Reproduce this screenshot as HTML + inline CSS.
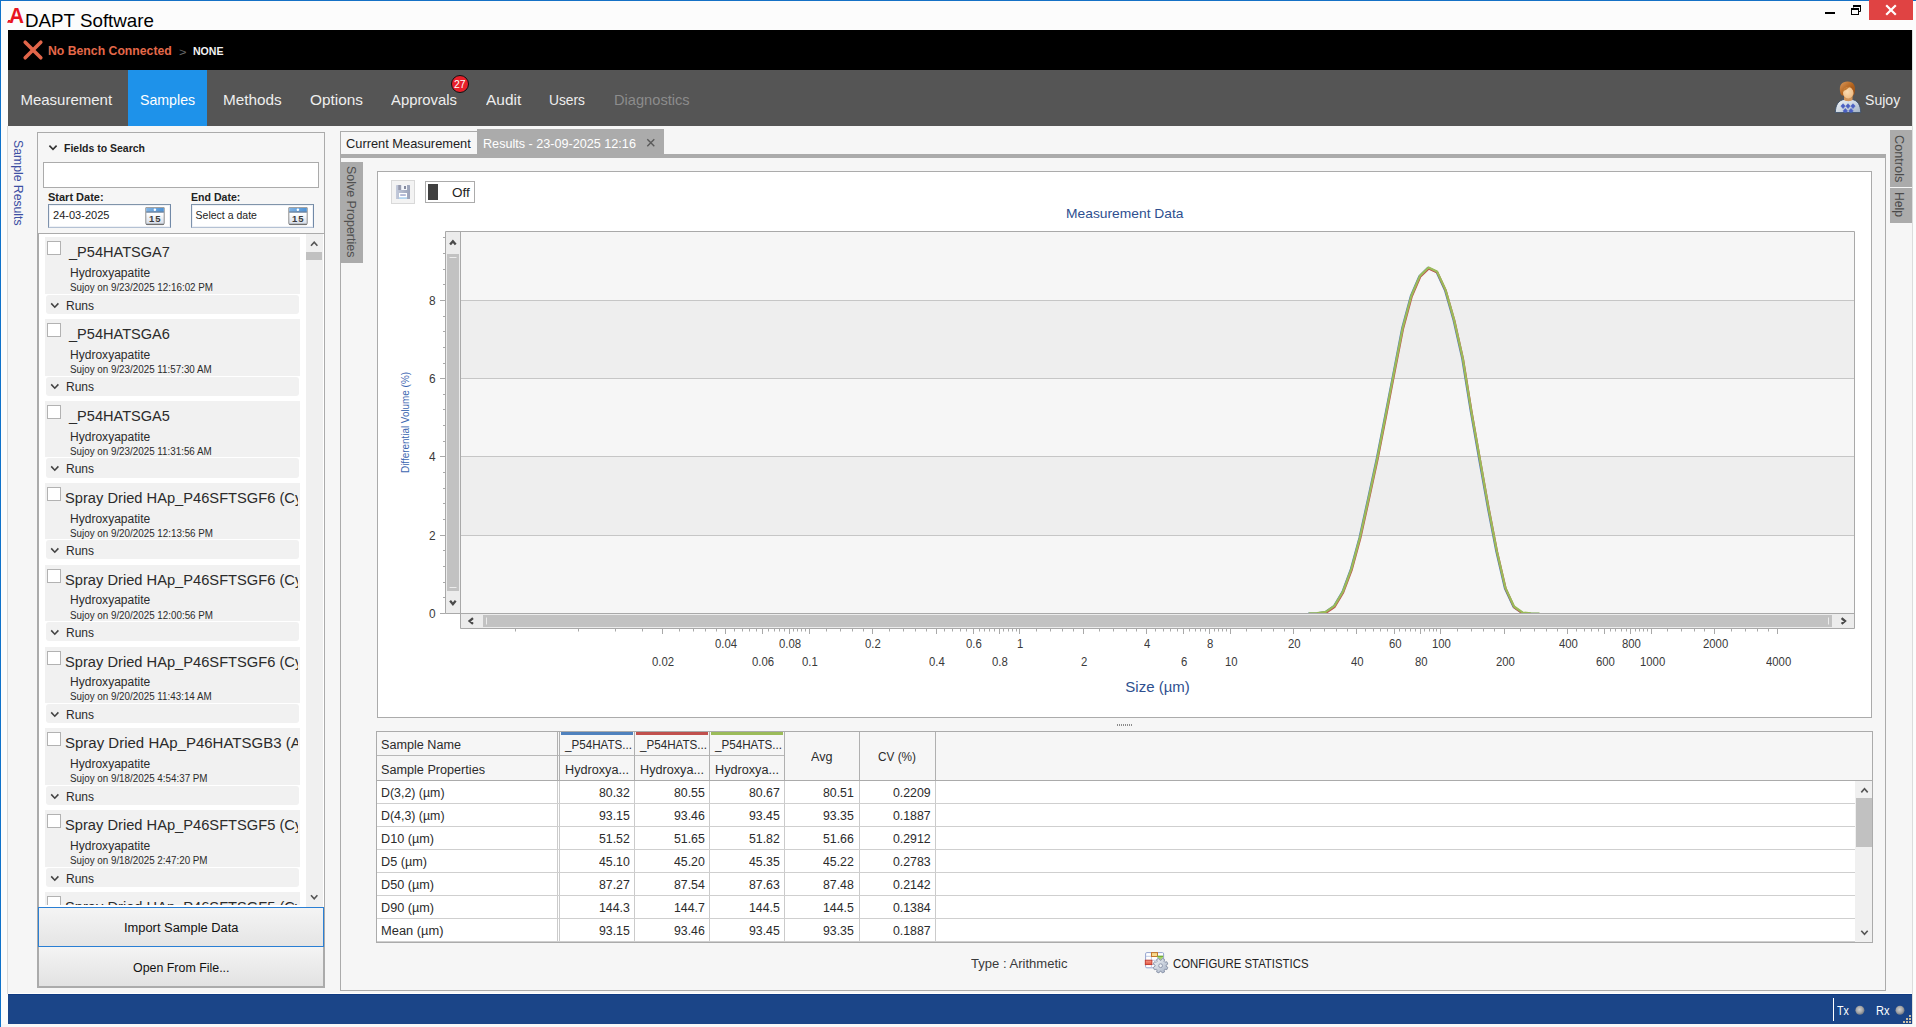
<!DOCTYPE html>
<html lang="en"><head><meta charset="utf-8"><title>ADAPT Software</title>
<style>
html,body{margin:0;padding:0;}
body{width:1916px;height:1027px;position:relative;overflow:hidden;background:#fcfcfc;font-family:"Liberation Sans",sans-serif;}
.r{position:absolute;box-sizing:border-box;}
.t{position:absolute;white-space:pre;line-height:1;transform-origin:0 0;}
svg{position:absolute;overflow:visible;}
</style></head>
<body>
<div class="r" style="left:0px;top:0px;width:1916px;height:1027px;background:#fcfcfc;"></div>
<div class="r" style="left:0px;top:0px;width:1916px;height:1px;background:#1571c6;"></div>
<div class="r" style="left:0px;top:0px;width:1px;height:1027px;background:#0f72ca;"></div>
<div class="r" style="left:8px;top:30px;width:1904px;height:994px;background:#f6f6f6;"></div>
<div class="r" style="left:1912px;top:30px;width:1px;height:994px;background:#dcdcdc;"></div>
<div class="r" style="left:7px;top:126px;width:1px;height:868px;background:#dadada;"></div>
<div class="t" style="top:5.00px;font-size:22px;color:#e8151f;left:8.70px;font-weight:700;transform:scaleX(0.9441);">A</div>
<svg style="left:0;top:0" width="40" height="30" viewBox="0 0 40 30"><path d="M7.04 22.85 L8.27 19.9 L10.6 19.9 L9.4 22.85 Z" fill="#e8151f"/></svg>
<div class="t" style="top:11.00px;font-size:19px;color:#000;left:25.00px;transform:scaleX(0.9878);">DAPT Software</div>
<div class="r" style="left:1825px;top:12px;width:10px;height:2px;background:#000;"></div>
<svg style="left:1850px;top:4px" width="12" height="12" viewBox="0 0 12 12"><path d="M3.5 2 V3.5 M10.5 2 V7.5 H8.5" fill="none" stroke="#000" stroke-width="1"/><path d="M3 2 H11" stroke="#000" stroke-width="2"/><rect x="1.5" y="4.5" width="7" height="6" fill="#fcfcfc" stroke="#000" stroke-width="1"/><path d="M1 5 H9" stroke="#000" stroke-width="2"/></svg>
<div class="r" style="left:1869px;top:0px;width:44px;height:20px;background:#e04343;"></div>
<svg style="left:1885px;top:4px" width="12" height="12" viewBox="0 0 12 12"><path d="M1.2 1.2 L10.8 10.8 M10.8 1.2 L1.2 10.8" stroke="#fff" stroke-width="2.2" fill="none"/></svg>
<div class="r" style="left:8px;top:30px;width:1904px;height:40px;background:#000;"></div>
<svg style="left:22px;top:39px" width="22" height="22" viewBox="0 0 22 22"><path d="M3.2 3.2 L18.8 18.8 M18.8 3.2 L3.2 18.8" stroke="#e2664a" stroke-width="3.6" stroke-linecap="round" fill="none"/></svg>
<div class="t" style="top:44.00px;font-size:13px;color:#e5694a;left:48.40px;font-weight:700;transform:scaleX(0.9417);">No Bench Connected</div>
<div class="t" style="top:46.50px;font-size:11px;color:#6a6a6a;left:178.50px;transform:scaleX(1.1675);">&gt;</div>
<div class="t" style="top:46.00px;font-size:11px;color:#f2f2f2;left:192.50px;font-weight:700;transform:scaleX(0.9597);">NONE</div>
<div class="r" style="left:8px;top:70px;width:1904px;height:56px;background:#555555;"></div>
<div class="r" style="left:128px;top:70px;width:79px;height:56px;background:#1e92ea;"></div>
<div class="t" style="top:92.00px;font-size:15px;color:#eeeeee;left:20.40px;">Measurement</div>
<div class="t" style="top:92.00px;font-size:15px;color:#fff;left:140.30px;transform:scaleX(0.9441);">Samples</div>
<div class="t" style="top:92.00px;font-size:15px;color:#eeeeee;left:223.30px;transform:scaleX(1.0203);">Methods</div>
<div class="t" style="top:92.00px;font-size:15px;color:#eeeeee;left:309.90px;transform:scaleX(1.0233);">Options</div>
<div class="t" style="top:92.00px;font-size:15px;color:#eeeeee;left:391.30px;transform:scaleX(0.9894);">Approvals</div>
<div class="t" style="top:92.00px;font-size:15px;color:#eeeeee;left:485.80px;transform:scaleX(1.0295);">Audit</div>
<div class="t" style="top:92.00px;font-size:15px;color:#eeeeee;left:549.30px;transform:scaleX(0.9190);">Users</div>
<div class="t" style="top:92.00px;font-size:15px;color:#8c8c8c;left:613.60px;transform:scaleX(0.9763);">Diagnostics</div>
<div class="r" style="left:451px;top:75.4px;width:18px;height:18px;background:#e8202a;border:1px solid #111;border-radius:50%;"></div>
<div class="t" style="top:79.00px;font-size:10.5px;color:#fff;left:454.20px;transform:scaleX(0.9932);">27</div>
<svg style="left:1828px;top:76px" width="40" height="42" viewBox="0 0 40 42">
<defs><linearGradient id="ug" x1="0" y1="0" x2="1" y2="1"><stop offset="0" stop-color="#f0f3f7"/><stop offset="0.5" stop-color="#cfd8e2"/><stop offset="1" stop-color="#9fafc3"/></linearGradient>
<radialGradient id="uf" cx="0.4" cy="0.4" r="0.75"><stop offset="0" stop-color="#fbdcb2"/><stop offset="0.7" stop-color="#f0c08a"/><stop offset="1" stop-color="#d69a5c"/></radialGradient>
<linearGradient id="uh" x1="0" y1="0" x2="1" y2="1"><stop offset="0" stop-color="#d99a5e"/><stop offset="0.5" stop-color="#b5651f"/><stop offset="1" stop-color="#8a4716"/></linearGradient>
<clipPath id="ub"><path d="M7.3 36.6 C7.6 28.5 10.5 24.4 16.2 23.4 L24 23.4 C29.6 24.4 32.4 28.5 32.8 36.6 Z"/></clipPath></defs>
<path d="M7.3 36.6 C7.6 28.5 10.5 24.4 16.2 23.4 L24 23.4 C29.6 24.4 32.4 28.5 32.8 36.6 Z" fill="url(#ug)" stroke="#3c4f69" stroke-width="0.9"/>
<g clip-path="url(#ub)" fill="#4a5fc2" stroke="#4a5fc2" stroke-width="0.6" stroke-linejoin="round"><path d="M15.05 27.70 L17.21 30.10 L15.05 32.50 L12.89 30.10 Z M20.00 27.70 L22.16 30.10 L20.00 32.50 L17.84 30.10 Z M25.00 27.70 L27.16 30.10 L25.00 32.50 L22.84 30.10 Z"/><path d="M17.30 32.40 L19.55 34.90 L17.30 37.40 L15.05 34.90 Z M23.00 32.40 L25.25 34.90 L23.00 37.40 L20.75 34.90 Z"/></g>
<path d="M16 20.5 H24.5 V24 C22.5 25.6 18 25.6 16 24 Z" fill="#d3955a"/>
<path d="M16 21 C18.5 23 22 23 24.5 21 L24.5 20 H16 Z" fill="#b87638"/>
<path d="M12.4 17 C10.5 9 14 5.6 19.6 5.6 C25 5.6 28.4 9.4 26.6 17.4 C26 19 25.4 19.6 24.8 19.4 L15 19.6 C13.8 19.6 13 18.8 12.4 17 Z" fill="url(#uh)"/>
<ellipse cx="20.3" cy="16.9" rx="5.3" ry="5.9" fill="url(#uf)"/>
<path d="M14.6 16.4 C14.4 12.4 17.5 10.8 22.6 10.4 C21 11.4 19 13 18 14 C16.8 14.4 15.4 15 14.6 16.4 Z" fill="#c27a34"/>
<path d="M22.4 10.5 C24.6 10.6 26.2 12.4 25.8 16.2 C25 14 23.8 12 22.4 10.5 Z" fill="#a85a1c"/>
</svg>
<div class="t" style="top:92.00px;font-size:15px;color:#eeeeee;left:1864.50px;transform:scaleX(0.9381);">Sujoy</div>
<div class="r" style="left:8px;top:993px;width:1904px;height:1px;background:#ffffff;"></div>
<div class="r" style="left:8px;top:994px;width:1904px;height:30px;background:#1b4588;"></div>
<div class="r" style="left:8px;top:994px;width:1904px;height:1px;background:#0f3a82;"></div>
<div class="r" style="left:1833px;top:998px;width:1px;height:23px;background:#fff;"></div>
<div class="t" style="top:1005.00px;font-size:12px;color:#fff;left:1837.20px;transform:scaleX(0.8852);">Tx</div>
<div class="t" style="top:1005.00px;font-size:12px;color:#fff;left:1875.50px;transform:scaleX(0.9205);">Rx</div>
<svg style="left:1850px;top:1000px" width="60" height="20" viewBox="0 0 60 20"><defs><radialGradient id="led" cx="0.45" cy="0.42" r="0.6"><stop offset="0" stop-color="#cfcfcf"/><stop offset="0.55" stop-color="#a9a9a9"/><stop offset="1" stop-color="#6c7380"/></radialGradient></defs><circle cx="9.9" cy="10.3" r="4.5" fill="url(#led)"/><circle cx="50" cy="10.3" r="4.5" fill="url(#led)"/></svg>
<svg style="left:1902px;top:1014px" width="10" height="10" viewBox="0 0 10 10"><g fill="#c9bfa6"><rect x="7" y="1" width="2" height="2"/><rect x="4" y="4" width="2" height="2"/><rect x="7" y="4" width="2" height="2"/><rect x="1" y="7" width="2" height="2"/><rect x="4" y="7" width="2" height="2"/><rect x="7" y="7" width="2" height="2"/></g></svg>
<div class="r" style="left:1px;top:1024px;width:1915px;height:3px;background:#f8f8f8;"></div>
<div class="t" style="left:24.60px;top:140.20px;font-size:13px;color:#3d4fa3;transform:rotate(90deg) scaleX(0.9402);">Sample Results</div>
<div class="r" style="left:37px;top:132px;width:288px;height:856px;background:#f6f6f6;border:1px solid #ababab;"></div>
<svg style="left:47.7px;top:143.6px" width="10" height="8" viewBox="0 0 10 8"><path d="M1.4 1.6 L5 5.4 L8.6 1.6" fill="none" stroke="#333" stroke-width="1.6"/></svg>
<div class="t" style="top:143.00px;font-size:11px;color:#222;left:64.00px;font-weight:700;transform:scaleX(0.9533);">Fields to Search</div>
<div class="r" style="left:43px;top:162px;width:276px;height:26px;background:#fff;border:1px solid #ababab;"></div>
<div class="t" style="top:192.00px;font-size:11px;color:#222;left:48.00px;font-weight:700;">Start Date:</div>
<div class="t" style="top:192.00px;font-size:11px;color:#222;left:191.30px;font-weight:700;transform:scaleX(0.9603);">End Date:</div>
<div class="r" style="left:48px;top:204px;width:123px;height:24px;background:#fff;border:1px solid #8094aa;border-color:#8094aa #7189a7 #b4c1d3 #7e92ac;box-shadow:inset 0 0 0 1px #eef1f6;"></div>
<div class="t" style="top:210.00px;font-size:10.5px;color:#222;left:52.60px;transform:scaleX(1.0519);">24-03-2025</div>
<svg style="left:145px;top:207px" width="20" height="19" viewBox="0 0 20 19"><defs><linearGradient id="cg48" x1="0" y1="0" x2="0" y2="1"><stop offset="0.35" stop-color="#ffffff"/><stop offset="1" stop-color="#d3dbe8"/></linearGradient><linearGradient id="cb48" x1="0" y1="0" x2="1" y2="0"><stop offset="0" stop-color="#82b3e3"/><stop offset="1" stop-color="#4e92d4"/></linearGradient></defs><path d="M0.8 0.7 H19.2 V16.3 Q19.2 17.6 17.9 17.6 H2.1 Q0.8 17.6 0.8 16.3 Z" fill="url(#cg48)" stroke="#8e8e8e" stroke-width="1"/><path d="M1.2 17.3 H18.8" stroke="#6a6a6a" stroke-width="1.1"/><rect x="1.2" y="1" width="17.6" height="3.8" fill="url(#cb48)"/><rect x="1.2" y="4.5" width="17.6" height="1.1" fill="#4f6b8b"/><circle cx="9.9" cy="2.8" r="1.25" fill="#fff"/><text x="10.3" y="15.1" font-family="Liberation Sans,sans-serif" font-size="9.5" font-weight="700" fill="#3c3c3c" text-anchor="middle" letter-spacing="1.1">15</text></svg>
<div class="r" style="left:191px;top:204px;width:123px;height:24px;background:#fff;border:1px solid #8094aa;border-color:#8094aa #7189a7 #b4c1d3 #7e92ac;box-shadow:inset 0 0 0 1px #eef1f6;"></div>
<div class="t" style="top:210.00px;font-size:10.5px;color:#222;left:195.60px;">Select a date</div>
<svg style="left:288px;top:207px" width="20" height="19" viewBox="0 0 20 19"><defs><linearGradient id="cg191" x1="0" y1="0" x2="0" y2="1"><stop offset="0.35" stop-color="#ffffff"/><stop offset="1" stop-color="#d3dbe8"/></linearGradient><linearGradient id="cb191" x1="0" y1="0" x2="1" y2="0"><stop offset="0" stop-color="#82b3e3"/><stop offset="1" stop-color="#4e92d4"/></linearGradient></defs><path d="M0.8 0.7 H19.2 V16.3 Q19.2 17.6 17.9 17.6 H2.1 Q0.8 17.6 0.8 16.3 Z" fill="url(#cg191)" stroke="#8e8e8e" stroke-width="1"/><path d="M1.2 17.3 H18.8" stroke="#6a6a6a" stroke-width="1.1"/><rect x="1.2" y="1" width="17.6" height="3.8" fill="url(#cb191)"/><rect x="1.2" y="4.5" width="17.6" height="1.1" fill="#4f6b8b"/><circle cx="9.9" cy="2.8" r="1.25" fill="#fff"/><text x="10.3" y="15.1" font-family="Liberation Sans,sans-serif" font-size="9.5" font-weight="700" fill="#3c3c3c" text-anchor="middle" letter-spacing="1.1">15</text></svg>
<div class="r" style="left:38px;top:233px;width:286.5px;height:674.5px;background:#fff;border:1px solid #ababab;border-bottom:none;"></div>
<div class="r" style="left:38.5px;top:234px;width:268px;height:670.5px;overflow:hidden">
<div class="r" style="left:6.5px;top:3.25px;width:255px;height:56.4px;background:#f1f1f1;"></div>
<div class="r" style="left:8.5px;top:7px;width:14px;height:14px;background:#fff;border:1px solid #b2b2b2;"></div>
<div class="t" style="left:30.10px;top:10.00px;font-size:15.5px;color:#2b2b2b;transform:scaleX(0.9394);">_P54HATSGA7</div>
<div class="t" style="left:31.50px;top:33.00px;font-size:12px;color:#2b2b2b;transform:scaleX(1.0032);">Hydroxyapatite</div>
<div class="t" style="left:31.50px;top:49.00px;font-size:10px;color:#2b2b2b;transform:scaleX(0.9817);">Sujoy on 9/23/2025 12:16:02 PM</div>
<div class="r" style="left:7.5px;top:60.75px;width:253px;height:19.1px;background:#f1f1f1;border-radius:3px;"></div>
<svg style="left:11.0px;top:68px" width="10" height="8" viewBox="0 0 10 8"><path d="M1.2 1.4 L4.8 5.2 L8.4 1.4" fill="none" stroke="#444" stroke-width="1.6"/></svg>
<div class="t" style="left:27.50px;top:65.00px;font-size:13px;color:#2b2b2b;transform:scaleX(0.9226);">Runs</div>
<div class="r" style="left:6.5px;top:85.11px;width:255px;height:56.4px;background:#f1f1f1;"></div>
<div class="r" style="left:8.5px;top:89px;width:14px;height:14px;background:#fff;border:1px solid #b2b2b2;"></div>
<div class="t" style="left:30.10px;top:92.00px;font-size:15.5px;color:#2b2b2b;transform:scaleX(0.9394);">_P54HATSGA6</div>
<div class="t" style="left:31.50px;top:115.00px;font-size:12px;color:#2b2b2b;transform:scaleX(1.0032);">Hydroxyapatite</div>
<div class="t" style="left:31.50px;top:131.00px;font-size:10px;color:#2b2b2b;transform:scaleX(0.9817);">Sujoy on 9/23/2025 11:57:30 AM</div>
<div class="r" style="left:7.5px;top:142.61px;width:253px;height:19.1px;background:#f1f1f1;border-radius:3px;"></div>
<svg style="left:11.0px;top:149px" width="10" height="8" viewBox="0 0 10 8"><path d="M1.2 1.4 L4.8 5.2 L8.4 1.4" fill="none" stroke="#444" stroke-width="1.6"/></svg>
<div class="t" style="left:27.50px;top:146.00px;font-size:13px;color:#2b2b2b;transform:scaleX(0.9226);">Runs</div>
<div class="r" style="left:6.5px;top:166.96px;width:255px;height:56.4px;background:#f1f1f1;"></div>
<div class="r" style="left:8.5px;top:171px;width:14px;height:14px;background:#fff;border:1px solid #b2b2b2;"></div>
<div class="t" style="left:30.10px;top:174.00px;font-size:15.5px;color:#2b2b2b;transform:scaleX(0.9394);">_P54HATSGA5</div>
<div class="t" style="left:31.50px;top:197.00px;font-size:12px;color:#2b2b2b;transform:scaleX(1.0032);">Hydroxyapatite</div>
<div class="t" style="left:31.50px;top:213.00px;font-size:10px;color:#2b2b2b;transform:scaleX(0.9817);">Sujoy on 9/23/2025 11:31:56 AM</div>
<div class="r" style="left:7.5px;top:224.46px;width:253px;height:19.1px;background:#f1f1f1;border-radius:3px;"></div>
<svg style="left:11.0px;top:231px" width="10" height="8" viewBox="0 0 10 8"><path d="M1.2 1.4 L4.8 5.2 L8.4 1.4" fill="none" stroke="#444" stroke-width="1.6"/></svg>
<div class="t" style="left:27.50px;top:228.00px;font-size:13px;color:#2b2b2b;transform:scaleX(0.9226);">Runs</div>
<div class="r" style="left:6.5px;top:248.82px;width:255px;height:56.4px;background:#f1f1f1;"></div>
<div class="r" style="left:8.5px;top:253px;width:14px;height:14px;background:#fff;border:1px solid #b2b2b2;"></div>
<div class="r" style="left:6.5px;top:249px;width:253.3px;height:30px;overflow:hidden">
<div class="t" style="left:20.00px;top:7.00px;font-size:15.5px;color:#2b2b2b;transform:scaleX(0.9466);">Spray Dried HAp_P46SFTSGF6 (Cyclone)</div>
</div>
<div class="t" style="left:31.50px;top:279.00px;font-size:12px;color:#2b2b2b;transform:scaleX(1.0032);">Hydroxyapatite</div>
<div class="t" style="left:31.50px;top:295.00px;font-size:10px;color:#2b2b2b;transform:scaleX(0.9817);">Sujoy on 9/20/2025 12:13:56 PM</div>
<div class="r" style="left:7.5px;top:306.32px;width:253px;height:19.1px;background:#f1f1f1;border-radius:3px;"></div>
<svg style="left:11.0px;top:313px" width="10" height="8" viewBox="0 0 10 8"><path d="M1.2 1.4 L4.8 5.2 L8.4 1.4" fill="none" stroke="#444" stroke-width="1.6"/></svg>
<div class="t" style="left:27.50px;top:310.00px;font-size:13px;color:#2b2b2b;transform:scaleX(0.9226);">Runs</div>
<div class="r" style="left:6.5px;top:330.68px;width:255px;height:56.4px;background:#f1f1f1;"></div>
<div class="r" style="left:8.5px;top:335px;width:14px;height:14px;background:#fff;border:1px solid #b2b2b2;"></div>
<div class="r" style="left:6.5px;top:331px;width:253.3px;height:30px;overflow:hidden">
<div class="t" style="left:20.00px;top:7.00px;font-size:15.5px;color:#2b2b2b;transform:scaleX(0.9466);">Spray Dried HAp_P46SFTSGF6 (Cyclone)</div>
</div>
<div class="t" style="left:31.50px;top:360.00px;font-size:12px;color:#2b2b2b;transform:scaleX(1.0032);">Hydroxyapatite</div>
<div class="t" style="left:31.50px;top:377.00px;font-size:10px;color:#2b2b2b;transform:scaleX(0.9817);">Sujoy on 9/20/2025 12:00:56 PM</div>
<div class="r" style="left:7.5px;top:388.18px;width:253px;height:19.1px;background:#f1f1f1;border-radius:3px;"></div>
<svg style="left:11.0px;top:395px" width="10" height="8" viewBox="0 0 10 8"><path d="M1.2 1.4 L4.8 5.2 L8.4 1.4" fill="none" stroke="#444" stroke-width="1.6"/></svg>
<div class="t" style="left:27.50px;top:392.00px;font-size:13px;color:#2b2b2b;transform:scaleX(0.9226);">Runs</div>
<div class="r" style="left:6.5px;top:412.53px;width:255px;height:56.4px;background:#f1f1f1;"></div>
<div class="r" style="left:8.5px;top:417px;width:14px;height:14px;background:#fff;border:1px solid #b2b2b2;"></div>
<div class="r" style="left:6.5px;top:413px;width:253.3px;height:30px;overflow:hidden">
<div class="t" style="left:20.00px;top:7.00px;font-size:15.5px;color:#2b2b2b;transform:scaleX(0.9466);">Spray Dried HAp_P46SFTSGF6 (Cyclone)</div>
</div>
<div class="t" style="left:31.50px;top:442.00px;font-size:12px;color:#2b2b2b;transform:scaleX(1.0032);">Hydroxyapatite</div>
<div class="t" style="left:31.50px;top:458.00px;font-size:10px;color:#2b2b2b;transform:scaleX(0.9817);">Sujoy on 9/20/2025 11:43:14 AM</div>
<div class="r" style="left:7.5px;top:470.03px;width:253px;height:19.1px;background:#f1f1f1;border-radius:3px;"></div>
<svg style="left:11.0px;top:477px" width="10" height="8" viewBox="0 0 10 8"><path d="M1.2 1.4 L4.8 5.2 L8.4 1.4" fill="none" stroke="#444" stroke-width="1.6"/></svg>
<div class="t" style="left:27.50px;top:474.00px;font-size:13px;color:#2b2b2b;transform:scaleX(0.9226);">Runs</div>
<div class="r" style="left:6.5px;top:494.39px;width:255px;height:56.4px;background:#f1f1f1;"></div>
<div class="r" style="left:8.5px;top:498px;width:14px;height:14px;background:#fff;border:1px solid #b2b2b2;"></div>
<div class="r" style="left:6.5px;top:494px;width:253.3px;height:30px;overflow:hidden">
<div class="t" style="left:20.00px;top:7.00px;font-size:15.5px;color:#2b2b2b;transform:scaleX(0.9680);">Spray Dried HAp_P46HATSGB3 (After)</div>
</div>
<div class="t" style="left:31.50px;top:524.00px;font-size:12px;color:#2b2b2b;transform:scaleX(1.0032);">Hydroxyapatite</div>
<div class="t" style="left:31.50px;top:540.00px;font-size:10px;color:#2b2b2b;transform:scaleX(0.9817);">Sujoy on 9/18/2025 4:54:37 PM</div>
<div class="r" style="left:7.5px;top:551.89px;width:253px;height:19.1px;background:#f1f1f1;border-radius:3px;"></div>
<svg style="left:11.0px;top:559px" width="10" height="8" viewBox="0 0 10 8"><path d="M1.2 1.4 L4.8 5.2 L8.4 1.4" fill="none" stroke="#444" stroke-width="1.6"/></svg>
<div class="t" style="left:27.50px;top:556.00px;font-size:13px;color:#2b2b2b;transform:scaleX(0.9226);">Runs</div>
<div class="r" style="left:6.5px;top:576.25px;width:255px;height:56.4px;background:#f1f1f1;"></div>
<div class="r" style="left:8.5px;top:580px;width:14px;height:14px;background:#fff;border:1px solid #b2b2b2;"></div>
<div class="r" style="left:6.5px;top:576px;width:253.3px;height:30px;overflow:hidden">
<div class="t" style="left:20.00px;top:7.00px;font-size:15.5px;color:#2b2b2b;transform:scaleX(0.9466);">Spray Dried HAp_P46SFTSGF5 (Cyclone)</div>
</div>
<div class="t" style="left:31.50px;top:606.00px;font-size:12px;color:#2b2b2b;transform:scaleX(1.0032);">Hydroxyapatite</div>
<div class="t" style="left:31.50px;top:622.00px;font-size:10px;color:#2b2b2b;transform:scaleX(0.9817);">Sujoy on 9/18/2025 2:47:20 PM</div>
<div class="r" style="left:7.5px;top:633.75px;width:253px;height:19.1px;background:#f1f1f1;border-radius:3px;"></div>
<svg style="left:11.0px;top:641px" width="10" height="8" viewBox="0 0 10 8"><path d="M1.2 1.4 L4.8 5.2 L8.4 1.4" fill="none" stroke="#444" stroke-width="1.6"/></svg>
<div class="t" style="left:27.50px;top:638.00px;font-size:13px;color:#2b2b2b;transform:scaleX(0.9226);">Runs</div>
<div class="r" style="left:6.5px;top:658.11px;width:255px;height:56.4px;background:#f1f1f1;"></div>
<div class="r" style="left:8.5px;top:662px;width:14px;height:14px;background:#fff;border:1px solid #b2b2b2;"></div>
<div class="r" style="left:6.5px;top:658px;width:253.3px;height:30px;overflow:hidden">
<div class="t" style="left:20.00px;top:7.00px;font-size:15.5px;color:#2b2b2b;transform:scaleX(0.9466);">Spray Dried HAp_P46SFTSGF5 (Cyclone)</div>
</div>
<div class="t" style="left:31.50px;top:688.00px;font-size:12px;color:#2b2b2b;transform:scaleX(1.0032);">Hydroxyapatite</div>
<div class="t" style="left:31.50px;top:704.00px;font-size:10px;color:#2b2b2b;transform:scaleX(0.9817);">Sujoy on 9/18/2025 1:02:11 PM</div>
<div class="r" style="left:7.5px;top:715.61px;width:253px;height:19.1px;background:#f1f1f1;border-radius:3px;"></div>
<svg style="left:11.0px;top:722px" width="10" height="8" viewBox="0 0 10 8"><path d="M1.2 1.4 L4.8 5.2 L8.4 1.4" fill="none" stroke="#444" stroke-width="1.6"/></svg>
<div class="t" style="left:27.50px;top:719.00px;font-size:13px;color:#2b2b2b;transform:scaleX(0.9226);">Runs</div>
</div>
<div class="r" style="left:306px;top:234px;width:16.5px;height:672.5px;background:#f0f0f0;"></div>
<svg style="left:309px;top:240px" width="11" height="8" viewBox="0 0 11 8"><path d="M2 5.8 L5.2 2.2 L8.4 5.8" fill="none" stroke="#555" stroke-width="1.6"/></svg>
<svg style="left:309px;top:893px" width="11" height="8" viewBox="0 0 11 8"><path d="M2 2.2 L5.2 5.8 L8.4 2.2" fill="none" stroke="#555" stroke-width="1.6"/></svg>
<div class="r" style="left:306px;top:252px;width:16px;height:7.6px;background:#c1c1c1;"></div>
<div class="r" style="left:38px;top:907px;width:286px;height:40px;border:1px solid #2a7fd4;background:linear-gradient(#f4f4f4,#e5e5e5);"></div>
<div class="t" style="top:922.00px;font-size:12.5px;color:#111;left:123.50px;transform:scaleX(1.0300);">Import Sample Data</div>
<div class="r" style="left:38px;top:947px;width:286px;height:40px;border:1px solid #ababab;background:linear-gradient(#f4f4f4,#e2e2e2);border-top:none;"></div>
<div class="t" style="top:962.00px;font-size:12.5px;color:#111;left:133.00px;transform:scaleX(0.9923);">Open From File...</div>
<div class="r" style="left:340px;top:154px;width:1546px;height:837px;background:#f6f6f6;border:1px solid #ababab;"></div>
<div class="r" style="left:340px;top:154px;width:1546px;height:4px;background:#ababab;"></div>
<div class="r" style="left:340px;top:131px;width:138px;height:23px;background:#f6f6f6;border:1px solid #ababab;border-bottom:none;"></div>
<div class="t" style="top:137.00px;font-size:13px;color:#222;left:346.30px;transform:scaleX(0.9870);">Current Measurement</div>
<div class="r" style="left:477px;top:129px;width:187px;height:25px;background:#ababab;"></div>
<div class="t" style="top:137.00px;font-size:13px;color:#fff;left:483.40px;transform:scaleX(0.9705);">Results - 23-09-2025 12:16</div>
<svg style="left:646px;top:138px" width="10" height="10" viewBox="0 0 10 10"><path d="M1.3 1.3 L8.3 8.3 M8.3 1.3 L1.3 8.3" stroke="#5a5a5a" stroke-width="1.4" fill="none"/></svg>
<div class="r" style="left:341px;top:162px;width:22px;height:101px;background:#ababab;"></div>
<div class="t" style="left:357.80px;top:166.40px;font-size:13px;color:#505050;transform:rotate(90deg) scaleX(0.9582);">Solve Properties</div>
<div class="r" style="left:1890px;top:130px;width:22px;height:57px;background:#ababab;"></div>
<div class="t" style="left:1905.80px;top:134.50px;font-size:13px;color:#4a4a4a;transform:rotate(90deg) scaleX(0.9771);">Controls</div>
<div class="r" style="left:1890px;top:188px;width:22px;height:35px;background:#ababab;"></div>
<div class="t" style="left:1905.80px;top:191.90px;font-size:13px;color:#4a4a4a;transform:rotate(90deg) scaleX(0.9350);">Help</div>
<div class="r" style="left:376.5px;top:171px;width:1495.5px;height:546.5px;background:#fff;border:1px solid #ababab;"></div>
<div class="r" style="left:391px;top:180px;width:24px;height:24px;background:#f3f3f3;border:1px solid #d9d9d9;"></div>
<svg style="left:396px;top:185px" width="14" height="14" viewBox="0 0 14 14"><defs><linearGradient id="fl" x1="0" y1="0" x2="1" y2="0"><stop offset="0" stop-color="#c3cadb"/><stop offset="0.5" stop-color="#adb5c9"/><stop offset="1" stop-color="#9aa2b8"/></linearGradient></defs><rect x="0" y="0" width="14" height="14" rx="0.6" fill="url(#fl)"/><rect x="2.3" y="0" width="2.6" height="5" fill="#9498ab"/><rect x="5.3" y="0" width="5.7" height="5" fill="#f3f5fa"/><rect x="8" y="1" width="2" height="3" fill="#84899c"/><rect x="3" y="8" width="8" height="6" fill="#ffffff"/><rect x="4.2" y="9.2" width="5.6" height="1.7" fill="#aab2d2"/><rect x="3" y="12.2" width="8" height="1.8" fill="#b4d5ef"/></svg>
<div class="r" style="left:425px;top:181px;width:50px;height:22px;background:#fff;border:1px solid #ababab;"></div>
<div class="r" style="left:428px;top:184px;width:10px;height:16px;background:#404040;"></div>
<div class="t" style="top:185.50px;font-size:13px;color:#222;left:452.00px;transform:scaleX(1.0409);">Off</div>
<div class="t" style="top:207.00px;font-size:13.5px;color:#2e4f8f;left:1066.00px;transform:scaleX(1.0235);">Measurement Data</div>
<div class="t" style="left:400.50px;top:472.50px;font-size:10px;color:#3b66b0;transform:rotate(-90deg) scaleX(0.9894);">Differential Volume (%)</div>
<div class="t" style="top:679.00px;font-size:15px;color:#2e4f8f;left:1125.30px;">Size (µm)</div>
<svg style="left:0;top:0" width="1916" height="1027" viewBox="0 0 1916 1027"><rect x="460.5" y="231.5" width="1394.0" height="382.0" fill="#f6f6f6"/>
<rect x="460.5" y="300.4" width="1394.0" height="78.3" fill="#eeeeee"/>
<rect x="460.5" y="456.9" width="1394.0" height="78.3" fill="#eeeeee"/>
<path d="M460.5 535.5 H1854.5" stroke="#c6c6c6" stroke-width="1"/>
<path d="M460.5 456.5 H1854.5" stroke="#c6c6c6" stroke-width="1"/>
<path d="M460.5 378.5 H1854.5" stroke="#c6c6c6" stroke-width="1"/>
<path d="M460.5 300.5 H1854.5" stroke="#c6c6c6" stroke-width="1"/>
<rect x="446" y="232" width="14" height="381" fill="#ececec"/>
<rect x="447" y="254" width="12" height="337" fill="#c2c2c2"/>
<path d="M449.5 257.5 H456.5 M449.5 587.5 H456.5" stroke="#ececec" stroke-width="1"/>
<path d="M450.1 244.6 L452.9 241.2 L455.7 244.6 M450.1 600.8 L452.9 604.2 L455.7 600.8" fill="none" stroke="#4a4a4a" stroke-width="2.3"/>
<rect x="461" y="614" width="1393" height="14" fill="#ececec"/>
<rect x="483" y="615" width="1349" height="12" fill="#c2c2c2"/>
<path d="M486.5 617.5 V624.5 M1828.5 617.5 V624.5" stroke="#ececec" stroke-width="1"/>
<path d="M473 618.2 L469.6 621 L473 623.8 M1841.6 618.2 L1845 621 L1841.6 623.8" fill="none" stroke="#4a4a4a" stroke-width="2.3"/>
<path d="M445.5 231.5 H1854.5 V628.5 H460.5 V231.5 M445.5 231.5 V613.5 H1854.5" fill="none" stroke="#a9a9a9" stroke-width="1"/>
<path d="M440 613.5 H445.5 M443 597.5 H445.5 M443 582.5 H445.5 M443 566.5 H445.5 M443 550.5 H445.5 M440 535.5 H445.5 M443 519.5 H445.5 M443 503.5 H445.5 M443 488.5 H445.5 M443 472.5 H445.5 M440 456.5 H445.5 M443 441.5 H445.5 M443 425.5 H445.5 M443 409.5 H445.5 M443 394.5 H445.5 M440 378.5 H445.5 M443 363.5 H445.5 M443 347.5 H445.5 M443 331.5 H445.5 M443 316.5 H445.5 M440 300.5 H445.5 M443 284.5 H445.5 M443 269.5 H445.5 M443 253.5 H445.5 M443 237.5 H445.5" stroke="#a9a9a9" stroke-width="1"/>
<path d="M515.5 628.5 V631.5 M578.5 628.5 V631.5 M615.5 628.5 V631.5 M642.5 628.5 V631.5 M662.5 628.5 V634 M679.5 628.5 V631.5 M693.5 628.5 V631.5 M705.5 628.5 V631.5 M716.5 628.5 V631.5 M725.5 628.5 V634 M734.5 628.5 V631.5 M742.5 628.5 V631.5 M749.5 628.5 V631.5 M756.5 628.5 V631.5 M762.5 628.5 V634 M768.5 628.5 V631.5 M774.5 628.5 V631.5 M779.5 628.5 V631.5 M784.5 628.5 V631.5 M789.5 628.5 V634 M793.5 628.5 V631.5 M797.5 628.5 V631.5 M801.5 628.5 V631.5 M805.5 628.5 V631.5 M809.5 628.5 V634 M826.5 628.5 V631.5 M840.5 628.5 V631.5 M852.5 628.5 V631.5 M863.5 628.5 V631.5 M872.5 628.5 V634 M889.5 628.5 V631.5 M903.5 628.5 V631.5 M915.5 628.5 V631.5 M926.5 628.5 V631.5 M936.5 628.5 V634 M944.5 628.5 V631.5 M952.5 628.5 V631.5 M960.5 628.5 V631.5 M966.5 628.5 V631.5 M973.5 628.5 V634 M979.5 628.5 V631.5 M984.5 628.5 V631.5 M989.5 628.5 V631.5 M994.5 628.5 V631.5 M999.5 628.5 V634 M1003.5 628.5 V631.5 M1008.5 628.5 V631.5 M1012.5 628.5 V631.5 M1016.5 628.5 V631.5 M1019.5 628.5 V634 M1036.5 628.5 V631.5 M1050.5 628.5 V631.5 M1062.5 628.5 V631.5 M1073.5 628.5 V631.5 M1083.5 628.5 V634 M1099.5 628.5 V631.5 M1113.5 628.5 V631.5 M1126.5 628.5 V631.5 M1136.5 628.5 V631.5 M1146.5 628.5 V634 M1155.5 628.5 V631.5 M1163.5 628.5 V631.5 M1170.5 628.5 V631.5 M1177.5 628.5 V631.5 M1183.5 628.5 V634 M1189.5 628.5 V631.5 M1195.5 628.5 V631.5 M1200.5 628.5 V631.5 M1205.5 628.5 V631.5 M1209.5 628.5 V634 M1214.5 628.5 V631.5 M1218.5 628.5 V631.5 M1222.5 628.5 V631.5 M1226.5 628.5 V631.5 M1230.5 628.5 V634 M1246.5 628.5 V631.5 M1261.5 628.5 V631.5 M1273.5 628.5 V631.5 M1284.5 628.5 V631.5 M1293.5 628.5 V634 M1310.5 628.5 V631.5 M1324.5 628.5 V631.5 M1336.5 628.5 V631.5 M1347.5 628.5 V631.5 M1356.5 628.5 V634 M1365.5 628.5 V631.5 M1373.5 628.5 V631.5 M1380.5 628.5 V631.5 M1387.5 628.5 V631.5 M1394.5 628.5 V634 M1399.5 628.5 V631.5 M1405.5 628.5 V631.5 M1410.5 628.5 V631.5 M1415.5 628.5 V631.5 M1420.5 628.5 V634 M1424.5 628.5 V631.5 M1429.5 628.5 V631.5 M1433.5 628.5 V631.5 M1436.5 628.5 V631.5 M1440.5 628.5 V634 M1457.5 628.5 V631.5 M1471.5 628.5 V631.5 M1483.5 628.5 V631.5 M1494.5 628.5 V631.5 M1504.5 628.5 V634 M1520.5 628.5 V631.5 M1534.5 628.5 V631.5 M1546.5 628.5 V631.5 M1557.5 628.5 V631.5 M1567.5 628.5 V634 M1576.5 628.5 V631.5 M1584.5 628.5 V631.5 M1591.5 628.5 V631.5 M1598.5 628.5 V631.5 M1604.5 628.5 V634 M1610.5 628.5 V631.5 M1615.5 628.5 V631.5 M1621.5 628.5 V631.5 M1626.5 628.5 V631.5 M1630.5 628.5 V634 M1635.5 628.5 V631.5 M1639.5 628.5 V631.5 M1643.5 628.5 V631.5 M1647.5 628.5 V631.5 M1651.5 628.5 V634 M1667.5 628.5 V631.5 M1681.5 628.5 V631.5 M1694.5 628.5 V631.5 M1704.5 628.5 V631.5 M1714.5 628.5 V634 M1731.5 628.5 V631.5 M1745.5 628.5 V631.5 M1757.5 628.5 V631.5 M1768.5 628.5 V631.5 M1777.5 628.5 V634" stroke="#a9a9a9" stroke-width="1"/>
<clipPath id="pc"><rect x="460.5" y="231.5" width="1394.0" height="381.5"/></clipPath>
<polyline clip-path="url(#pc)" fill="none" stroke="#4f81bd" stroke-width="2.2" stroke-linejoin="round" points="1308.2,613.7 1316.8,613.3 1325.3,612.1 1333.9,606.2 1342.5,591.8 1351.0,568.9 1359.5,537.7 1368.1,498.7 1376.7,459.0 1385.2,415.6 1393.8,371.7 1402.3,327.8 1410.8,296.3 1419.4,276.2 1428.0,267.8 1436.5,271.8 1445.0,290.2 1453.6,320.2 1462.2,358.3 1470.7,410.9 1479.2,459.3 1487.8,507.4 1496.3,551.3 1504.9,588.2 1513.5,606.8 1522.0,612.8 1530.5,613.6 1539.1,613.8"/>
<polyline clip-path="url(#pc)" fill="none" stroke="#c0504d" stroke-width="2.2" stroke-linejoin="round" points="1309.0,614.3 1317.6,613.9 1326.1,612.7 1334.7,606.8 1343.2,592.4 1351.8,569.5 1360.3,538.3 1368.9,499.3 1377.5,459.6 1386.0,416.2 1394.5,372.3 1403.1,328.4 1411.6,296.9 1420.2,276.8 1428.8,268.4 1437.3,272.4 1445.8,290.8 1454.4,320.8 1463.0,358.9 1471.5,411.5 1480.0,459.9 1488.6,508.0 1497.1,551.9 1505.7,588.8 1514.2,607.4 1522.8,613.4 1531.3,614.2 1539.9,614.4"/>
<polyline clip-path="url(#pc)" fill="none" stroke="#9bbb59" stroke-width="2.2" stroke-linejoin="round" points="1308.8,613.4 1317.3,613.0 1325.8,611.8 1334.4,605.9 1343.0,591.5 1351.5,568.6 1360.0,537.4 1368.6,498.4 1377.2,458.7 1385.7,415.3 1394.2,371.4 1402.8,327.5 1411.3,296.0 1419.9,275.9 1428.5,267.5 1437.0,271.5 1445.5,289.9 1454.1,319.9 1462.7,358.0 1471.2,410.6 1479.8,459.0 1488.3,507.1 1496.8,551.0 1505.4,587.9 1514.0,606.5 1522.5,612.5 1531.0,613.3 1539.6,613.5"/></svg>
<div class="t" style="top:608.00px;font-size:12px;color:#3a3a3a;left:428.50px;transform:scaleX(0.9889);">0</div>
<div class="t" style="top:530.00px;font-size:12px;color:#3a3a3a;left:428.50px;transform:scaleX(0.9889);">2</div>
<div class="t" style="top:451.00px;font-size:12px;color:#3a3a3a;left:428.50px;transform:scaleX(0.9889);">4</div>
<div class="t" style="top:373.00px;font-size:12px;color:#3a3a3a;left:428.50px;transform:scaleX(0.9889);">6</div>
<div class="t" style="top:295.00px;font-size:12px;color:#3a3a3a;left:428.50px;transform:scaleX(0.9889);">8</div>
<div class="t" style="top:638.00px;font-size:12px;color:#3a3a3a;left:715.16px;transform:scaleX(0.9450);">0.04</div>
<div class="t" style="top:638.00px;font-size:12px;color:#3a3a3a;left:779.16px;transform:scaleX(0.9450);">0.08</div>
<div class="t" style="top:638.00px;font-size:12px;color:#3a3a3a;left:865.32px;transform:scaleX(0.9450);">0.2</div>
<div class="t" style="top:638.00px;font-size:12px;color:#3a3a3a;left:966.32px;transform:scaleX(0.9450);">0.6</div>
<div class="t" style="top:638.00px;font-size:12px;color:#3a3a3a;left:1017.05px;transform:scaleX(0.9450);">1</div>
<div class="t" style="top:638.00px;font-size:12px;color:#3a3a3a;left:1144.05px;transform:scaleX(0.9450);">4</div>
<div class="t" style="top:638.00px;font-size:12px;color:#3a3a3a;left:1207.05px;transform:scaleX(0.9450);">8</div>
<div class="t" style="top:638.00px;font-size:12px;color:#3a3a3a;left:1287.89px;transform:scaleX(0.9450);">20</div>
<div class="t" style="top:638.00px;font-size:12px;color:#3a3a3a;left:1388.89px;transform:scaleX(0.9450);">60</div>
<div class="t" style="top:638.00px;font-size:12px;color:#3a3a3a;left:1431.74px;transform:scaleX(0.9450);">100</div>
<div class="t" style="top:638.00px;font-size:12px;color:#3a3a3a;left:1558.74px;transform:scaleX(0.9450);">400</div>
<div class="t" style="top:638.00px;font-size:12px;color:#3a3a3a;left:1621.74px;transform:scaleX(0.9450);">800</div>
<div class="t" style="top:638.00px;font-size:12px;color:#3a3a3a;left:1702.59px;transform:scaleX(0.9450);">2000</div>
<div class="t" style="top:656.00px;font-size:12px;color:#3a3a3a;left:652.16px;transform:scaleX(0.9450);">0.02</div>
<div class="t" style="top:656.00px;font-size:12px;color:#3a3a3a;left:752.16px;transform:scaleX(0.9450);">0.06</div>
<div class="t" style="top:656.00px;font-size:12px;color:#3a3a3a;left:802.32px;transform:scaleX(0.9450);">0.1</div>
<div class="t" style="top:656.00px;font-size:12px;color:#3a3a3a;left:929.32px;transform:scaleX(0.9450);">0.4</div>
<div class="t" style="top:656.00px;font-size:12px;color:#3a3a3a;left:992.32px;transform:scaleX(0.9450);">0.8</div>
<div class="t" style="top:656.00px;font-size:12px;color:#3a3a3a;left:1081.05px;transform:scaleX(0.9450);">2</div>
<div class="t" style="top:656.00px;font-size:12px;color:#3a3a3a;left:1181.05px;transform:scaleX(0.9450);">6</div>
<div class="t" style="top:656.00px;font-size:12px;color:#3a3a3a;left:1224.89px;transform:scaleX(0.9450);">10</div>
<div class="t" style="top:656.00px;font-size:12px;color:#3a3a3a;left:1350.89px;transform:scaleX(0.9450);">40</div>
<div class="t" style="top:656.00px;font-size:12px;color:#3a3a3a;left:1414.89px;transform:scaleX(0.9450);">80</div>
<div class="t" style="top:656.00px;font-size:12px;color:#3a3a3a;left:1495.74px;transform:scaleX(0.9450);">200</div>
<div class="t" style="top:656.00px;font-size:12px;color:#3a3a3a;left:1595.74px;transform:scaleX(0.9450);">600</div>
<div class="t" style="top:656.00px;font-size:12px;color:#3a3a3a;left:1639.59px;transform:scaleX(0.9450);">1000</div>
<div class="t" style="top:656.00px;font-size:12px;color:#3a3a3a;left:1765.59px;transform:scaleX(0.9450);">4000</div>
<div class="r" style="left:376px;top:731px;width:1497px;height:212px;background:#fff;border:1px solid #ababab;"></div>
<div class="r" style="left:377px;top:732px;width:1495px;height:48px;background:#f6f6f6;"></div>
<svg style="left:1117px;top:723px" width="15" height="4" viewBox="0 0 15 4"><rect x="0" y="1" width="1" height="2" fill="#8c8c8c"/><rect x="2" y="1" width="1" height="2" fill="#8c8c8c"/><rect x="4" y="1" width="1" height="2" fill="#8c8c8c"/><rect x="6" y="1" width="1" height="2" fill="#8c8c8c"/><rect x="8" y="1" width="1" height="2" fill="#8c8c8c"/><rect x="10" y="1" width="1" height="2" fill="#8c8c8c"/><rect x="12" y="1" width="1" height="2" fill="#8c8c8c"/><rect x="14" y="1" width="1" height="2" fill="#8c8c8c"/></svg>
<svg style="left:0;top:0" width="1916" height="1027" viewBox="0 0 1916 1027"><path d="M377 780.5 H1872" stroke="#ababab" stroke-width="1"/>
<path d="M377 755.5 H784.5" stroke="#b8b8b8" stroke-width="1"/>
<path d="M557.5 732 V780" stroke="#b0b0b0" stroke-width="1"/>
<path d="M557.5 781 V942" stroke="#cbcbcb" stroke-width="1"/>
<path d="M559.5 732 V780" stroke="#b0b0b0" stroke-width="1"/>
<path d="M559.5 781 V942" stroke="#cbcbcb" stroke-width="1"/>
<path d="M634.5 732 V780" stroke="#b0b0b0" stroke-width="1"/>
<path d="M634.5 781 V942" stroke="#cbcbcb" stroke-width="1"/>
<path d="M709.5 732 V780" stroke="#b0b0b0" stroke-width="1"/>
<path d="M709.5 781 V942" stroke="#cbcbcb" stroke-width="1"/>
<path d="M784.5 732 V780" stroke="#b0b0b0" stroke-width="1"/>
<path d="M784.5 781 V942" stroke="#cbcbcb" stroke-width="1"/>
<path d="M859.5 732 V780" stroke="#b0b0b0" stroke-width="1"/>
<path d="M859.5 781 V942" stroke="#cbcbcb" stroke-width="1"/>
<path d="M935.5 732 V780" stroke="#b0b0b0" stroke-width="1"/>
<path d="M935.5 781 V942" stroke="#cbcbcb" stroke-width="1"/>
<path d="M377 803.5 H1855" stroke="#cfcfcf" stroke-width="1"/>
<path d="M377 826.5 H1855" stroke="#cfcfcf" stroke-width="1"/>
<path d="M377 849.5 H1855" stroke="#cfcfcf" stroke-width="1"/>
<path d="M377 872.5 H1855" stroke="#cfcfcf" stroke-width="1"/>
<path d="M377 895.5 H1855" stroke="#cfcfcf" stroke-width="1"/>
<path d="M377 918.5 H1855" stroke="#cfcfcf" stroke-width="1"/>
<path d="M377 941.5 H1855" stroke="#cfcfcf" stroke-width="1"/>
<rect x="561" y="732" width="72" height="3" fill="#4f81bd"/>
<rect x="636" y="732" width="72" height="3" fill="#c0504d"/>
<rect x="711" y="732" width="72" height="3" fill="#9bbb59"/></svg>
<div class="t" style="top:739.00px;font-size:12.5px;color:#2b2b2b;left:381.00px;transform:scaleX(1.0101);">Sample Name</div>
<div class="t" style="top:764.00px;font-size:12.5px;color:#2b2b2b;left:381.00px;transform:scaleX(1.0114);">Sample Properties</div>
<div class="t" style="top:739.00px;font-size:12.5px;color:#2b2b2b;left:565.00px;transform:scaleX(0.9303);">_P54HATS...</div>
<div class="t" style="top:764.00px;font-size:12.5px;color:#2b2b2b;left:565.00px;transform:scaleX(1.0124);">Hydroxya...</div>
<div class="t" style="top:739.00px;font-size:12.5px;color:#2b2b2b;left:640.00px;transform:scaleX(0.9303);">_P54HATS...</div>
<div class="t" style="top:764.00px;font-size:12.5px;color:#2b2b2b;left:640.00px;transform:scaleX(1.0124);">Hydroxya...</div>
<div class="t" style="top:739.00px;font-size:12.5px;color:#2b2b2b;left:715.00px;transform:scaleX(0.9303);">_P54HATS...</div>
<div class="t" style="top:764.00px;font-size:12.5px;color:#2b2b2b;left:715.00px;transform:scaleX(1.0124);">Hydroxya...</div>
<div class="t" style="top:751.00px;font-size:12.5px;color:#2b2b2b;left:811.00px;transform:scaleX(1.0087);">Avg</div>
<div class="t" style="top:751.00px;font-size:12.5px;color:#2b2b2b;left:878.00px;transform:scaleX(0.9434);">CV (%)</div>
<div class="t" style="top:787.00px;font-size:12.5px;color:#2b2b2b;left:381.00px;transform:scaleX(0.9900);">D(3,2) (µm)</div>
<div class="t" style="top:787.00px;font-size:12.5px;color:#2b2b2b;left:598.69px;transform:scaleX(0.9850);">80.32</div>
<div class="t" style="top:787.00px;font-size:12.5px;color:#2b2b2b;left:673.69px;transform:scaleX(0.9850);">80.55</div>
<div class="t" style="top:787.00px;font-size:12.5px;color:#2b2b2b;left:748.69px;transform:scaleX(0.9850);">80.67</div>
<div class="t" style="top:787.00px;font-size:12.5px;color:#2b2b2b;left:822.79px;transform:scaleX(0.9850);">80.51</div>
<div class="t" style="top:787.00px;font-size:12.5px;color:#2b2b2b;left:892.54px;transform:scaleX(0.9850);">0.2209</div>
<div class="t" style="top:810.00px;font-size:12.5px;color:#2b2b2b;left:381.00px;transform:scaleX(0.9900);">D(4,3) (µm)</div>
<div class="t" style="top:810.00px;font-size:12.5px;color:#2b2b2b;left:598.69px;transform:scaleX(0.9850);">93.15</div>
<div class="t" style="top:810.00px;font-size:12.5px;color:#2b2b2b;left:673.69px;transform:scaleX(0.9850);">93.46</div>
<div class="t" style="top:810.00px;font-size:12.5px;color:#2b2b2b;left:748.69px;transform:scaleX(0.9850);">93.45</div>
<div class="t" style="top:810.00px;font-size:12.5px;color:#2b2b2b;left:822.79px;transform:scaleX(0.9850);">93.35</div>
<div class="t" style="top:810.00px;font-size:12.5px;color:#2b2b2b;left:892.54px;transform:scaleX(0.9850);">0.1887</div>
<div class="t" style="top:833.00px;font-size:12.5px;color:#2b2b2b;left:381.00px;transform:scaleX(1.0125);">D10 (µm)</div>
<div class="t" style="top:833.00px;font-size:12.5px;color:#2b2b2b;left:598.69px;transform:scaleX(0.9850);">51.52</div>
<div class="t" style="top:833.00px;font-size:12.5px;color:#2b2b2b;left:673.69px;transform:scaleX(0.9850);">51.65</div>
<div class="t" style="top:833.00px;font-size:12.5px;color:#2b2b2b;left:748.69px;transform:scaleX(0.9850);">51.82</div>
<div class="t" style="top:833.00px;font-size:12.5px;color:#2b2b2b;left:822.79px;transform:scaleX(0.9850);">51.66</div>
<div class="t" style="top:833.00px;font-size:12.5px;color:#2b2b2b;left:892.54px;transform:scaleX(0.9850);">0.2912</div>
<div class="t" style="top:856.00px;font-size:12.5px;color:#2b2b2b;left:381.00px;transform:scaleX(1.0134);">D5 (µm)</div>
<div class="t" style="top:856.00px;font-size:12.5px;color:#2b2b2b;left:598.69px;transform:scaleX(0.9850);">45.10</div>
<div class="t" style="top:856.00px;font-size:12.5px;color:#2b2b2b;left:673.69px;transform:scaleX(0.9850);">45.20</div>
<div class="t" style="top:856.00px;font-size:12.5px;color:#2b2b2b;left:748.69px;transform:scaleX(0.9850);">45.35</div>
<div class="t" style="top:856.00px;font-size:12.5px;color:#2b2b2b;left:822.79px;transform:scaleX(0.9850);">45.22</div>
<div class="t" style="top:856.00px;font-size:12.5px;color:#2b2b2b;left:892.54px;transform:scaleX(0.9850);">0.2783</div>
<div class="t" style="top:879.00px;font-size:12.5px;color:#2b2b2b;left:381.00px;transform:scaleX(1.0125);">D50 (µm)</div>
<div class="t" style="top:879.00px;font-size:12.5px;color:#2b2b2b;left:598.69px;transform:scaleX(0.9850);">87.27</div>
<div class="t" style="top:879.00px;font-size:12.5px;color:#2b2b2b;left:673.69px;transform:scaleX(0.9850);">87.54</div>
<div class="t" style="top:879.00px;font-size:12.5px;color:#2b2b2b;left:748.69px;transform:scaleX(0.9850);">87.63</div>
<div class="t" style="top:879.00px;font-size:12.5px;color:#2b2b2b;left:822.79px;transform:scaleX(0.9850);">87.48</div>
<div class="t" style="top:879.00px;font-size:12.5px;color:#2b2b2b;left:892.54px;transform:scaleX(0.9850);">0.2142</div>
<div class="t" style="top:902.00px;font-size:12.5px;color:#2b2b2b;left:381.00px;transform:scaleX(1.0125);">D90 (µm)</div>
<div class="t" style="top:902.00px;font-size:12.5px;color:#2b2b2b;left:598.69px;transform:scaleX(0.9850);">144.3</div>
<div class="t" style="top:902.00px;font-size:12.5px;color:#2b2b2b;left:673.69px;transform:scaleX(0.9850);">144.7</div>
<div class="t" style="top:902.00px;font-size:12.5px;color:#2b2b2b;left:748.69px;transform:scaleX(0.9850);">144.5</div>
<div class="t" style="top:902.00px;font-size:12.5px;color:#2b2b2b;left:822.79px;transform:scaleX(0.9850);">144.5</div>
<div class="t" style="top:902.00px;font-size:12.5px;color:#2b2b2b;left:892.54px;transform:scaleX(0.9850);">0.1384</div>
<div class="t" style="top:925.00px;font-size:12.5px;color:#2b2b2b;left:381.00px;transform:scaleX(1.0299);">Mean (µm)</div>
<div class="t" style="top:925.00px;font-size:12.5px;color:#2b2b2b;left:598.69px;transform:scaleX(0.9850);">93.15</div>
<div class="t" style="top:925.00px;font-size:12.5px;color:#2b2b2b;left:673.69px;transform:scaleX(0.9850);">93.46</div>
<div class="t" style="top:925.00px;font-size:12.5px;color:#2b2b2b;left:748.69px;transform:scaleX(0.9850);">93.45</div>
<div class="t" style="top:925.00px;font-size:12.5px;color:#2b2b2b;left:822.79px;transform:scaleX(0.9850);">93.35</div>
<div class="t" style="top:925.00px;font-size:12.5px;color:#2b2b2b;left:892.54px;transform:scaleX(0.9850);">0.1887</div>
<div class="r" style="left:1855px;top:781px;width:17px;height:161px;background:#f0f0f0;"></div>
<div class="r" style="left:1856px;top:798px;width:16px;height:49px;background:#c1c1c1;"></div>
<svg style="left:1859px;top:786px" width="11" height="8" viewBox="0 0 11 8"><path d="M2.3 6.4 L5.5 2.8 L8.7 6.4" fill="none" stroke="#555" stroke-width="1.6"/></svg>
<svg style="left:1859px;top:929px" width="11" height="8" viewBox="0 0 11 8"><path d="M2.3 1.8 L5.5 5.4 L8.7 1.8" fill="none" stroke="#555" stroke-width="1.6"/></svg>
<div class="t" style="top:957.50px;font-size:12.5px;color:#3a3a3a;left:971.30px;transform:scaleX(1.0444);">Type : Arithmetic</div>
<div class="t" style="top:957.50px;font-size:12.5px;color:#222;left:1172.50px;transform:scaleX(0.9103);">CONFIGURE STATISTICS</div>
<svg style="left:1144px;top:951px" width="26" height="25" viewBox="0 0 26 25">
<defs><linearGradient id="gg" x1="0" y1="0" x2="1" y2="1"><stop offset="0" stop-color="#f4f6fa"/><stop offset="0.55" stop-color="#c8d0dc"/><stop offset="1" stop-color="#a3afc4"/></linearGradient>
<linearGradient id="rg" x1="0" y1="0" x2="0" y2="1"><stop offset="0" stop-color="#f79a88"/><stop offset="1" stop-color="#e4553f"/></linearGradient></defs>
<rect x="1.6" y="1.6" width="18" height="15.2" rx="1.2" fill="#ffffff" stroke="#93a3cf" stroke-width="1"/>
<path d="M2 5.3 H19.4 M2 9.3 H19.4 M2 13.5 H19.4 M7.4 2 V16.6 M13.5 2 V16.6" stroke="#b9c4e2" stroke-width="0.9" fill="none"/>
<rect x="7.5" y="1.6" width="6" height="3.9" fill="#f9db8c" stroke="#c4752c" stroke-width="1"/>
<path d="M13.3 5 H19.2 V6.2 L16.3 9 L13.3 6.2 Z" fill="#a4d266"/><rect x="13.3" y="4.7" width="5.9" height="1.1" fill="#69a42e"/>
<rect x="1.3" y="9.2" width="6.6" height="4.4" fill="url(#rg)" stroke="#c23a2b" stroke-width="0.9"/>
<path d="M17.11 9.22 L18.23 7.48 L20.55 8.44 L20.11 10.47 L20.83 11.19 L22.86 10.75 L23.82 13.07 L22.08 14.19 L22.08 15.21 L23.82 16.33 L22.86 18.65 L20.83 18.21 L20.11 18.93 L20.55 20.96 L18.23 21.92 L17.11 20.18 L16.09 20.18 L14.97 21.92 L12.65 20.96 L13.09 18.93 L12.37 18.21 L10.34 18.65 L9.38 16.33 L11.12 15.21 L11.12 14.19 L9.38 13.07 L10.34 10.75 L12.37 11.19 L13.09 10.47 L12.65 8.44 L14.97 7.48 L16.09 9.22 Z" fill="url(#gg)" stroke="#858fa5" stroke-width="0.9" stroke-linejoin="round"/>
<circle cx="16.6" cy="14.7" r="1.9" fill="#eef1f6" stroke="#8892a8" stroke-width="0.9"/>
</svg>
</body></html>
